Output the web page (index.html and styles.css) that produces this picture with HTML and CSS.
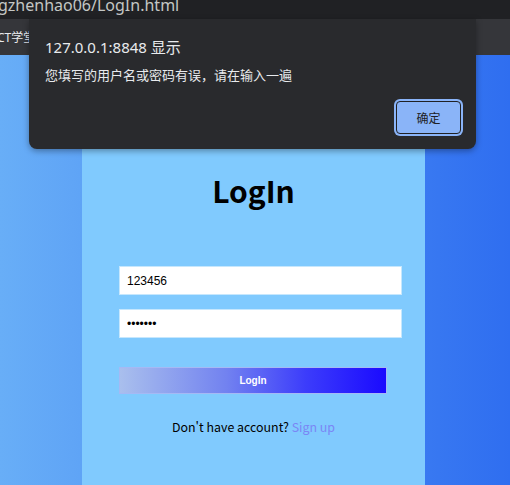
FILE: index.html
```html
<!DOCTYPE html>
<html lang="zh-CN">
<head>
<meta charset="utf-8">
<title>LogIn</title>
<link rel="stylesheet" href="styles.css">
</head>
<body>
<div class="chrome">
  <div class="urlbar"><span class="url">gzhenhao06/LogIn.html</span></div>
  <div class="bookmarks"><span class="bm">CT学堂</span></div>
</div>
<main class="page">
  <section class="panel">
    <h1 class="title">LogIn</h1>
    <form class="form">
      <input class="field" type="text" value="123456">
      <input class="field" type="password" value="1234567">
      <button class="submit" type="button">LogIn</button>
    </form>
    <p class="signup">Don't have account? <a class="link" href="#">Sign up</a></p>
  </section>
</main>
<div class="dialog">
  <div class="dlg-title">127.0.0.1:8848 显示</div>
  <div class="dlg-msg">您填写的用户名或密码有误，请在输入一遍</div>
  <div class="dlg-actions"><button class="dlg-btn" type="button">确定</button></div>
</div>
</body>
</html>
```
FILE: styles.css
```css
* { box-sizing: border-box; }
html, body { margin: 0; padding: 0; }
body {
  width: 510px;
  height: 485px;
  overflow: hidden;
  position: relative;
  font-family: "Noto Sans", "Noto Sans CJK SC", sans-serif;
  display: flex;
  flex-direction: column;
}
.chrome { flex: none; }
.urlbar {
  height: 19px;
  background: #202124;
  overflow: hidden;
  position: relative;
}
.url {
  display: block;
  margin-top: -6px;
  margin-left: -2px;
  font-family: "Noto Sans", "Noto Sans CJK SC", sans-serif;
  font-size: 16px;
  line-height: 22px;
  color: #c4c7c5;
  white-space: nowrap;
}
.bookmarks {
  height: 36px;
  background: #35363a;
  display: flex;
  align-items: center;
  overflow: hidden;
}
.bm {
  margin-left: -3px;
  font-size: 12px;
  color: #e8eaed;
  white-space: nowrap;
}
.page {
  flex: 1;
  background: linear-gradient(to right, #68aef7, #2f6ef0);
  display: flex;
  justify-content: flex-start;
  padding-left: 82px;
}
.panel {
  width: 343px;
  background: #80cafe;
  display: flex;
  flex-direction: column;
}
.title {
  margin: 115px 0 0;
  text-align: center;
  font-family: "Noto Sans CJK SC", sans-serif;
  font-weight: 700;
  font-size: 30px;
  line-height: 40px;
  color: #000;
}
.form {
  margin: 56px 0 0 37px;
  display: flex;
  flex-direction: column;
  align-items: flex-start;
}
.field {
  width: 283px;
  height: 29px;
  margin: 0 0 14px;
  border: 1px solid #c6e7fd;
  background: #fff;
  padding: 0 7px;
  font-family: "Liberation Sans", Arial, sans-serif;
  font-size: 12px;
  color: #000;
  outline: none;
}
.field + .field { margin-bottom: 0; }
.submit {
  margin-top: 29px;
  width: 268px;
  height: 27px;
  border: 1px solid #a5b9f4;
  background: linear-gradient(to right, #a9bfed, #7282f0 40%, #3c3cfb 70%, #1a0aff);
  color: #fff;
  font-family: "Liberation Sans", Arial, sans-serif;
  font-weight: 700;
  font-size: 10px;
  padding: 0;
}
.signup {
  margin: 24px 0 0;
  text-align: center;
  font-family: "Noto Sans CJK SC", sans-serif;
  font-size: 12.4px;
  color: #000;
}
.link { color: #7b86f5; text-decoration: none; }
.dialog {
  position: absolute;
  left: 29px;
  top: 19px;
  width: 447px;
  height: 130px;
  background: #292a2d;
  border-radius: 0 0 8px 8px;
  box-shadow: 0 2px 6px rgba(0,0,0,0.35);
  padding: 18px 16px 0;
  color: #e8eaed;
}
.dlg-title {
  font-size: 15px;
  line-height: 20px;
}
.dlg-msg {
  margin-top: 9px;
  font-family: "Noto Sans CJK SC", sans-serif;
  font-size: 13px;
  line-height: 18px;
}
.dlg-actions {
  display: flex;
  justify-content: flex-end;
  margin-top: 17px;
  margin-right: -1px;
}
.dlg-btn {
  width: 65px;
  height: 33px;
  background: #8ab4f8;
  border: 1px solid #202124;
  border-radius: 4px;
  box-shadow: 0 0 0 2px #8ab4f8;
  font-family: "Noto Sans CJK SC", sans-serif;
  font-size: 12px;
  color: #202124;
  padding: 0;
}
```
